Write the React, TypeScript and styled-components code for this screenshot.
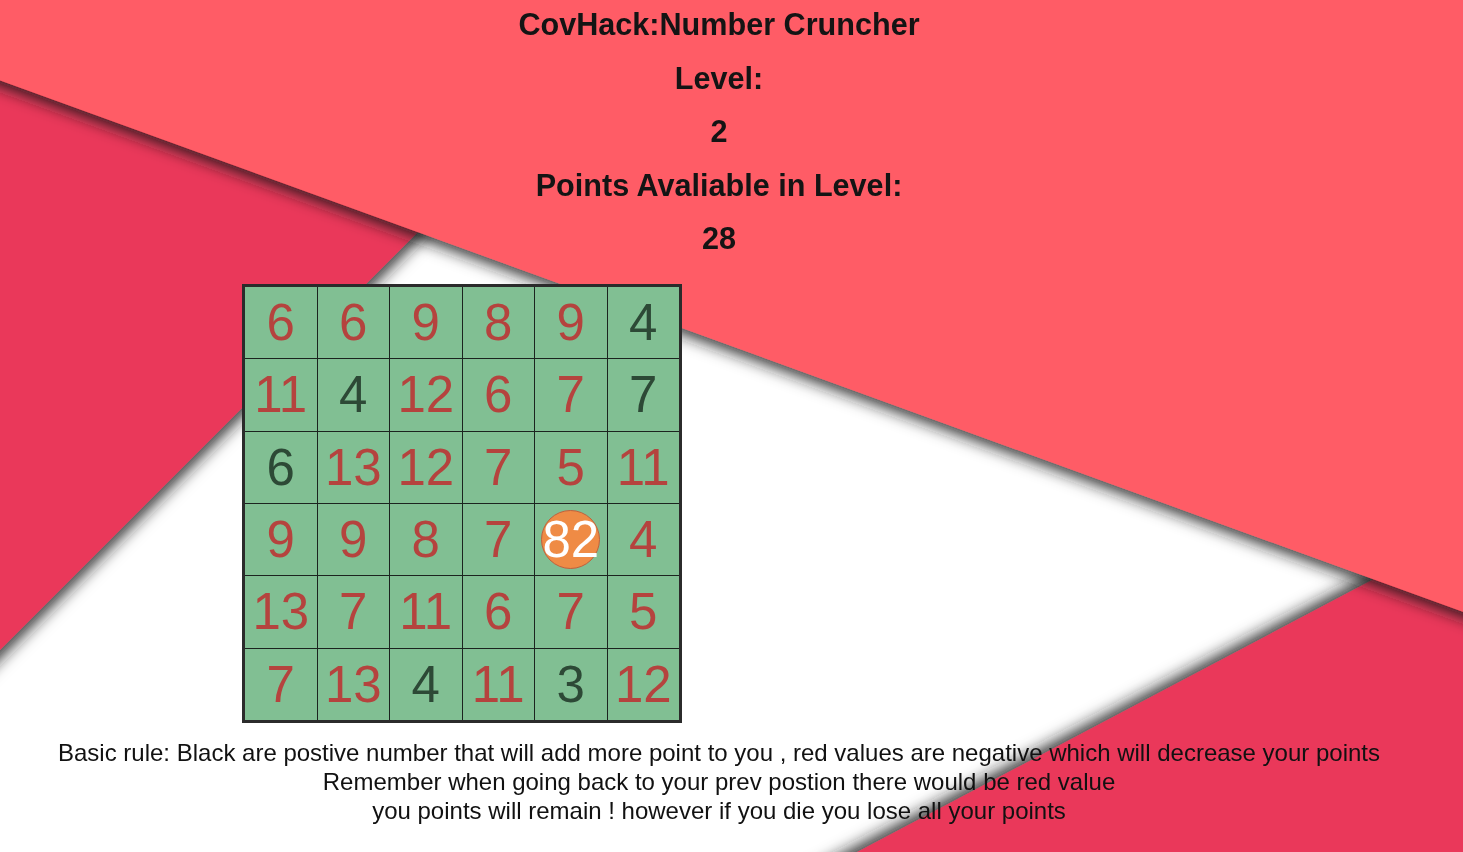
import React from "react";
import styled, { createGlobalStyle } from "styled-components";

const GlobalStyle = createGlobalStyle`
  html, body {
    margin: 0;
    padding: 0;
    overflow: hidden;
  }
  html {
    background: #ffffff;
  }
  body {
    font-family: "Liberation Sans", Arial, sans-serif;
    color: #111111;
  }
`;

const Backdrop = styled.svg`
  position: fixed;
  inset: 0;
  width: 100vw;
  height: 100vh;
  z-index: 0;
  display: block;
`;

const Page = styled.main`
  position: relative;
  z-index: 1;
  width: 1438px;
  display: flex;
  flex-direction: column;
`;

const Header = styled.header`
  display: flex;
  flex-direction: column;
  align-items: center;
  gap: 5.5px;
`;

const HeadLine = styled.h1`
  margin: 0;
  font-size: 30.6px;
  line-height: 48px;
  font-weight: 700;
  color: #141414;
`;

const Board = styled.div`
  margin: 22px 0 0 242px;
  width: 440px;
  height: 439px;
  box-sizing: border-box;
  display: grid;
  grid-template-columns: repeat(6, 1fr);
  grid-template-rows: repeat(6, 1fr);
  gap: 1px;
  background: #1c241f;
  border: 3px solid #2b2b2b;
`;

const Cell = styled.div<{ $tone: "neg" | "pos" | "player" }>`
  background: #81bf93;
  display: flex;
  align-items: center;
  justify-content: center;
  font-size: 51px;
  line-height: 1;
  color: ${(p) => (p.$tone === "pos" ? "#2d4936" : "#b5433e")};
  overflow: visible;
`;

const Token = styled.div`
  width: 59px;
  height: 59px;
  box-sizing: border-box;
  border-radius: 50%;
  background: #ef8b45;
  border: 1.5px solid #c0603d;
  display: flex;
  align-items: center;
  justify-content: center;
  color: #ffffff;
  font-size: 51px;
  line-height: 1;
  overflow: visible;
  white-space: nowrap;
`;

const Rules = styled.p`
  margin: 15px 0 0;
  text-align: center;
  font-size: 24px;
  line-height: 29px;
  color: #111111;
`;

type Tone = "neg" | "pos" | "player";
const grid: [number, Tone][][] = [
  [[6, "neg"], [6, "neg"], [9, "neg"], [8, "neg"], [9, "neg"], [4, "pos"]],
  [[11, "neg"], [4, "pos"], [12, "neg"], [6, "neg"], [7, "neg"], [7, "pos"]],
  [[6, "pos"], [13, "neg"], [12, "neg"], [7, "neg"], [5, "neg"], [11, "neg"]],
  [[9, "neg"], [9, "neg"], [8, "neg"], [7, "neg"], [82, "player"], [4, "neg"]],
  [[13, "neg"], [7, "neg"], [11, "neg"], [6, "neg"], [7, "neg"], [5, "neg"]],
  [[7, "neg"], [13, "neg"], [4, "pos"], [11, "neg"], [3, "pos"], [12, "neg"]],
];

export default function App() {
  return (
    <>
      <GlobalStyle />
      <Backdrop viewBox="0 0 1463 852" preserveAspectRatio="none">
        <defs>
          <filter id="shade" filterUnits="userSpaceOnUse" x="-200" y="-200" width="2000" height="1300">
            <feMorphology in="SourceAlpha" operator="dilate" radius="4" result="d" />
            <feGaussianBlur in="d" stdDeviation="8" result="b" />
            <feFlood floodColor="#1a1a1a" floodOpacity="0.9" />
            <feComposite in2="b" operator="in" result="s" />
            <feMerge>
              <feMergeNode in="s" />
              <feMergeNode in="SourceGraphic" />
            </feMerge>
          </filter>
        </defs>
        <polygon points="-50,-50 700,-50 -50,700" fill="#ea375a" filter="url(#shade)" />
        <polygon points="1700,407 1700,1000 577,1000" fill="#ea375a" filter="url(#shade)" />
        <polygon points="-100,-100 1700,-100 1700,698 -100,44" fill="#ff5c66" filter="url(#shade)" />
      </Backdrop>
      <Page>
        <Header>
          <HeadLine>CovHack:Number Cruncher</HeadLine>
          <HeadLine>Level:</HeadLine>
          <HeadLine>2</HeadLine>
          <HeadLine>Points Avaliable in Level:</HeadLine>
          <HeadLine>28</HeadLine>
        </Header>
        <Board>
          {grid.flatMap((row, r) =>
            row.map(([v, tone], c) => (
              <Cell key={`${r}-${c}`} $tone={tone}>
                {tone === "player" ? <Token>{v}</Token> : v}
              </Cell>
            ))
          )}
        </Board>
        <Rules>
          Basic rule: Black are postive number that will add more point to you , red values are negative which will decrease your points
          <br />
          Remember when going back to your prev postion there would be red value
          <br />
          you points will remain ! however if you die you lose all your points
        </Rules>
      </Page>
    </>
  );
}
